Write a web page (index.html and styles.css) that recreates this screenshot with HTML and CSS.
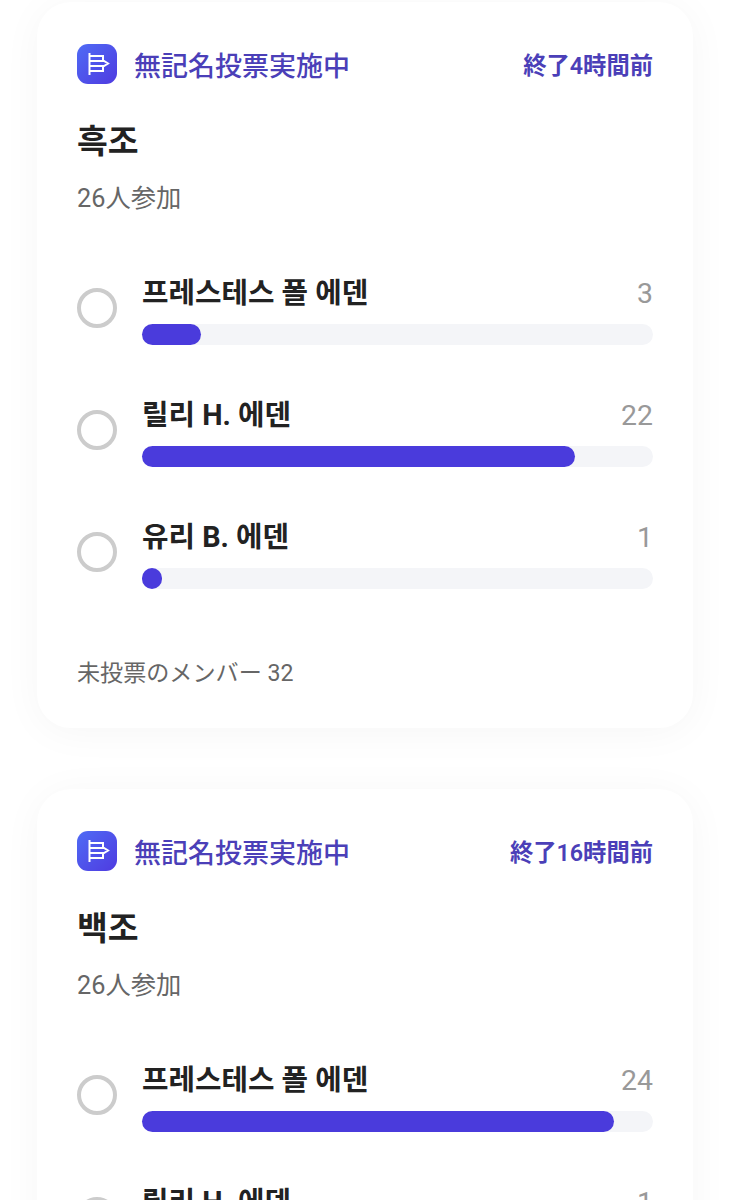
FILE: index.html
```html
<!DOCTYPE html>
<html>
<head>
  <meta charset="UTF-8">
  <title>Poll</title>
  <link rel="stylesheet" href="styles.css">
</head>
<body>
  <div class="card">
    <div class="card-head">
      <span class="poll-icon">
        <svg width="40" height="40" viewBox="0 0 40 40" fill="none" stroke="#fff" stroke-width="2">
          <path d="M12.5 9V31"/>
          <path d="M12.5 12H26V17"/>
          <path d="M12.5 17H27L31 19.5L27 22H12.5"/>
          <path d="M26 22V27H12.5"/>
        </svg>
      </span>
      <span class="poll-state">無記名投票実施中</span>
      <span class="poll-time">終了4時間前</span>
    </div>
    <h2 class="poll-title" lang="ko">흑조</h2>
    <p class="poll-count">26人参加</p>
    <div class="option">
      <span class="radio"></span>
      <div class="option-body">
        <div class="option-line"><span class="option-name" lang="ko">프레스테스 폴 에덴</span><span class="votes">3</span></div>
        <div class="track"><div class="fill" style="width: 59px"></div></div>
      </div>
    </div>
    <div class="option">
      <span class="radio"></span>
      <div class="option-body">
        <div class="option-line"><span class="option-name" lang="ko">릴리 H. 에덴</span><span class="votes">22</span></div>
        <div class="track"><div class="fill" style="width: 433px"></div></div>
      </div>
    </div>
    <div class="option">
      <span class="radio"></span>
      <div class="option-body">
        <div class="option-line"><span class="option-name" lang="ko">유리 B. 에덴</span><span class="votes">1</span></div>
        <div class="track"><div class="fill" style="width: 20px"></div></div>
      </div>
    </div>
    <p class="not-voted">未投票のメンバー 32</p>
  </div>

  <div class="card">
    <div class="card-head">
      <span class="poll-icon">
        <svg width="40" height="40" viewBox="0 0 40 40" fill="none" stroke="#fff" stroke-width="2">
          <path d="M12.5 9V31"/>
          <path d="M12.5 12H26V17"/>
          <path d="M12.5 17H27L31 19.5L27 22H12.5"/>
          <path d="M26 22V27H12.5"/>
        </svg>
      </span>
      <span class="poll-state">無記名投票実施中</span>
      <span class="poll-time">終了16時間前</span>
    </div>
    <h2 class="poll-title" lang="ko">백조</h2>
    <p class="poll-count">26人参加</p>
    <div class="option">
      <span class="radio"></span>
      <div class="option-body">
        <div class="option-line"><span class="option-name" lang="ko">프레스테스 폴 에덴</span><span class="votes">24</span></div>
        <div class="track"><div class="fill" style="width: 472px"></div></div>
      </div>
    </div>
    <div class="option">
      <span class="radio"></span>
      <div class="option-body">
        <div class="option-line"><span class="option-name" lang="ko">릴리 H. 에덴</span><span class="votes">1</span></div>
        <div class="track"><div class="fill" style="width: 20px"></div></div>
      </div>
    </div>
  </div>
</body>
</html>
```

FILE: styles.css
```css
html, body {
  height: 1200px;
  overflow: hidden;
}
body {
  font-family: Roboto, "Noto Sans CJK JP", "Noto Sans CJK KR", sans-serif;
  margin: 0;
  padding: 2px 37px 0;
  background-color: #fff;
  color: #222;
}
.card {
  background: white;
  border-radius: 34px;
  padding: 42px 40px 37px;
  margin-bottom: 61px;
  box-shadow: 0 4px 40px rgba(0,0,0,0.04);
}
.card-head {
  display: flex;
  align-items: center;
  height: 40px;
}
.poll-icon {
  width: 40px;
  height: 40px;
  border-radius: 11px;
  background: linear-gradient(135deg, #4f6bf5, #4f3be0);
  margin-right: 17px;
}
.poll-state {
  font-size: 27px;
  font-weight: 500;
  color: #4b3fb8;
}
.poll-time {
  margin-left: auto;
  font-size: 23.3px;
  font-weight: 600;
  color: #4b3fb8;
}
.poll-title {
  font-size: 33.5px;
  font-weight: 700;
  line-height: 44px;
  margin: 36px 0 0;
}
.poll-count {
  font-size: 25.3px;
  line-height: 36px;
  color: #666;
  margin: 17px 0 0;
}
.option {
  display: flex;
  align-items: center;
  height: 122px;
}
.poll-count + .option {
  margin-top: 30px;
}
.radio {
  width: 40px;
  height: 40px;
  box-sizing: border-box;
  border: 4px solid #ccc;
  border-radius: 50%;
  margin-right: 25px;
}
.option-body {
  flex: 1;
}
.option-line {
  display: flex;
  justify-content: space-between;
  align-items: baseline;
  height: 40px;
  line-height: 44px;
  margin-bottom: 13px;
}
.option-name {
  font-size: 28.8px;
  font-weight: 700;
}
.votes {
  font-size: 28.4px;
  color: #999;
}
.track {
  height: 21px;
  border-radius: 11px;
  background-color: #f4f5f8;
}
.fill {
  height: 21px;
  border-radius: 11px;
  background-color: #4a3bdc;
}
.not-voted {
  font-size: 23.1px;
  line-height: 34px;
  color: #666;
  margin: 44px 0 0;
}
```
